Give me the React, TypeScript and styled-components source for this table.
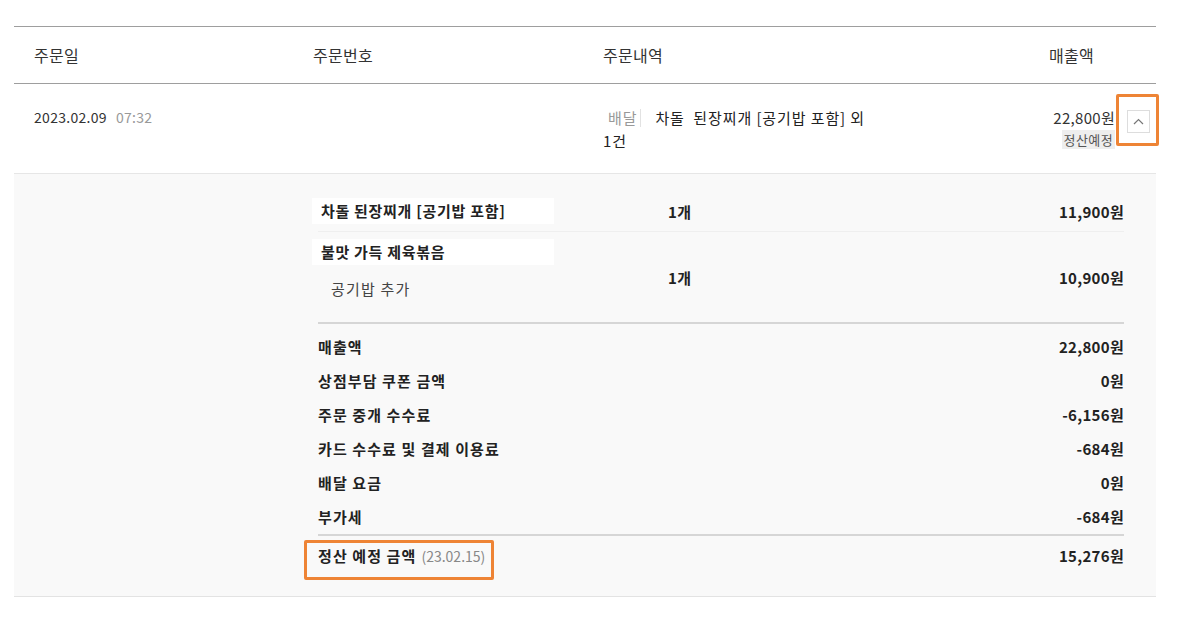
import React from 'react'
import styled, { createGlobalStyle } from 'styled-components'

const GlobalStyle = createGlobalStyle`
  body {
    margin: 0;
    background: #fff;
    color: #333;
    font-family: 'Noto Sans CJK KR', 'Noto Sans', sans-serif;
  }
`

const Page = styled.div`
  padding: 26px 21px 0 14px;
`

const Table = styled.div`
  border-top: 1px solid #9e9e9e;
`

const HeaderRow = styled.div`
  display: grid;
  grid-template-columns: 279px 290px 1fr auto;
  align-items: center;
  height: 56px;
  padding: 0 62px 0 20px;
  border-bottom: 1px solid #9e9e9e;
  font-size: 16px;
  letter-spacing: 0.3px;
  color: #333;
`

const OrderRow = styled.div`
  display: grid;
  grid-template-columns: 279px 290px 1fr auto;
  align-items: start;
  height: 90px;
  box-sizing: border-box;
  padding: 22px 6px 0 20px;
  border-bottom: 1px solid #e6e6e6;
  font-size: 14px;
  letter-spacing: 0.3px;
  line-height: 23px;
`

const DateText = styled.span`
  color: #333;
`

const TimeText = styled.span`
  color: #999;
  margin-left: 9px;
`

const OrderSummary = styled.div`
  display: flex;
  flex-direction: column;
  color: #222;
  font-size: 15px;
  letter-spacing: 0.9px;
`

const SummaryLine = styled.div`
  display: flex;
  align-items: center;
`

const DeliveryTag = styled.span`
  color: #999;
  padding: 0 3px 0 5px;
  margin-right: 14px;
  border-right: 1px solid #e2e2e2;
  line-height: 18px;
`

const AmountCell = styled.div`
  display: flex;
  align-items: flex-start;
  gap: 12px;
`

const AmountBlock = styled.div`
  display: flex;
  flex-direction: column;
  align-items: flex-end;
  font-size: 15px;
`

const StatusTag = styled.span`
  margin-top: 1px;
  padding: 0 2px;
  background: #eeeeee;
  color: #555;
  font-size: 13px;
  letter-spacing: 0.4px;
  line-height: 19px;
`

const Highlight = styled.div<{ $inset: string }>`
  position: relative;

  &::after {
    content: '';
    position: absolute;
    inset: ${({ $inset }) => $inset};
    border: 3px solid #ee8435;
    border-radius: 2px;
    pointer-events: none;
  }
`

const ToggleButton = styled.button`
  display: flex;
  align-items: center;
  justify-content: center;
  width: 23px;
  height: 23px;
  margin-top: 4px;
  padding: 0;
  background: #fff;
  border: 1px solid #dddddd;
  cursor: pointer;
`

const Detail = styled.div`
  background: #f9f9f9;
  padding: 17px 32px 0 304px;
  border-bottom: 1px solid #e3e3e3;
`

const ItemList = styled.div`
  border-bottom: 2px solid #d6d6d6;
`

const ItemRow = styled.div`
  display: grid;
  grid-template-columns: 350px 1fr auto;
  align-items: center;
  padding: 7px 0;
  font-size: 15px;
  font-weight: 700;
  letter-spacing: 0.3px;
  color: #222;

  & + & {
    border-top: 1px solid #efefef;
  }
`

const ItemName = styled.div`
  width: 242px;
  height: 26px;
  box-sizing: border-box;
  margin-left: -6px;
  padding: 0 9px;
  background: #fff;
  line-height: 26px;
  letter-spacing: 0.7px;
`

const OptionText = styled.div`
  padding: 13px 0 15px 13px;
  font-weight: 400;
  color: #444;
  line-height: 22px;
  letter-spacing: 1.2px;
`

const SummaryList = styled.div`
  padding-top: 6px;
  border-bottom: 2px solid #d6d6d6;
`

const SummaryRow = styled.div`
  display: flex;
  justify-content: space-between;
  line-height: 34px;
  font-size: 15px;
  font-weight: 700;
  letter-spacing: 0.3px;
  color: #222;
`

const SummaryLabel = styled.span`
  letter-spacing: 1.1px;
`

const TotalRow = styled.div`
  display: flex;
  justify-content: space-between;
  align-items: flex-start;
  height: 60px;
  box-sizing: border-box;
  padding-top: 8px;
  line-height: 24px;
  font-size: 15px;
  font-weight: 700;
  letter-spacing: 0.3px;
  color: #222;
`

const TotalLabel = styled.span`
  letter-spacing: 1.1px;
`

const TotalDate = styled.span`
  margin-left: 5px;
  font-size: 14px;
  font-weight: 400;
  letter-spacing: 0;
  color: #888;
`

const items = [
  { name: '차돌 된장찌개 [공기밥 포함]', qty: '1개', price: '11,900원' },
  { name: '불맛 가득 제육볶음', option: '공기밥 추가', qty: '1개', price: '10,900원' },
]

const summary = [
  ['매출액', '22,800원'],
  ['상점부담 쿠폰 금액', '0원'],
  ['주문 중개 수수료', '-6,156원'],
  ['카드 수수료 및 결제 이용료', '-684원'],
  ['배달 요금', '0원'],
  ['부가세', '-684원'],
]

function ChevronUp() {
  return (
    <svg width="11" height="7" viewBox="0 0 11 7" fill="none">
      <polyline points="1,6 5.5,1.5 10,6" stroke="#777" strokeWidth="1.2" />
    </svg>
  )
}

export default function App() {
  return (
    <Page>
      <GlobalStyle />
      <Table>
        <HeaderRow>
          <span>주문일</span>
          <span>주문번호</span>
          <span>주문내역</span>
          <span>매출액</span>
        </HeaderRow>
        <OrderRow>
          <div>
            <DateText>2023.02.09</DateText>
            <TimeText>07:32</TimeText>
          </div>
          <div />
          <OrderSummary>
            <SummaryLine>
              <DeliveryTag>배달</DeliveryTag>
              <span>차돌&nbsp; 된장찌개 [공기밥 포함] 외</span>
            </SummaryLine>
            <span>1건</span>
          </OrderSummary>
          <AmountCell>
            <AmountBlock>
              <span>22,800원</span>
              <StatusTag>정산예정</StatusTag>
            </AmountBlock>
            <Highlight $inset="-12px -9px -13px -11px">
              <ToggleButton aria-label="접기">
                <ChevronUp />
              </ToggleButton>
            </Highlight>
          </AmountCell>
        </OrderRow>
        <Detail>
          <ItemList>
            {items.map((item) => (
              <ItemRow key={item.name}>
                <div>
                  <ItemName>{item.name}</ItemName>
                  {item.option && <OptionText>{item.option}</OptionText>}
                </div>
                <span>{item.qty}</span>
                <span>{item.price}</span>
              </ItemRow>
            ))}
          </ItemList>
          <SummaryList>
            {summary.map(([label, value]) => (
              <SummaryRow key={label}>
                <SummaryLabel>{label}</SummaryLabel>
                <span>{value}</span>
              </SummaryRow>
            ))}
          </SummaryList>
          <TotalRow>
            <Highlight $inset="-4px -9px -12px -14px">
              <TotalLabel>정산 예정 금액</TotalLabel>
              <TotalDate>(23.02.15)</TotalDate>
            </Highlight>
            <span>15,276원</span>
          </TotalRow>
        </Detail>
      </Table>
    </Page>
  )
}
